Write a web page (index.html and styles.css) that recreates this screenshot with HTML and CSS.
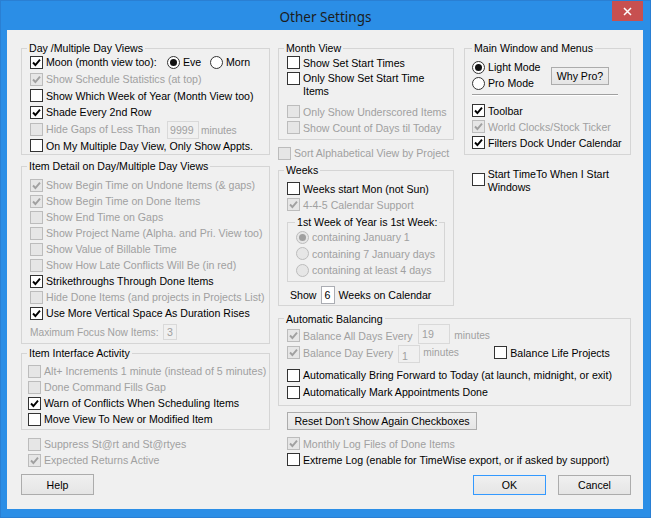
FILE: index.html
```html
<!DOCTYPE html>
<html>
<head>
<meta charset="utf-8">
<title>Other Settings</title>
<link rel="stylesheet" href="styles.css">
</head>
<body>
<div class="window">
  <div class="titlebar">
    <span></span>
    <div class="title">Other Settings</div>
    <div class="close"><svg viewBox="0 0 9 9" width="9" height="9"><path d="M1 1L8 8M8 1L1 8"/></svg></div>
  </div>
  <div class="client">
    <div class="col-left">
      <fieldset class="fs g-day">
        <legend>Day /Multiple Day Views</legend>
        <div class="ck tall"><span class="cb"><svg class="tick" viewBox="0 0 11 11"><path d="M2 5.5L4.4 8L9 2.6"/></svg></span><span class="w-moon">Moon (month view too):</span><span class="rb on"></span><span class="w-eve">Eve</span><span class="rb"></span><span>Morn</span></div>
        <div class="ck tall dis"><span class="cb"><svg class="tick" viewBox="0 0 11 11"><path d="M2 5.5L4.4 8L9 2.6"/></svg></span>Show Schedule Statistics (at top)</div>
        <div class="ck tall"><span class="cb"></span>Show Which Week of Year (Month View too)</div>
        <div class="ck tall"><span class="cb"><svg class="tick" viewBox="0 0 11 11"><path d="M2 5.5L4.4 8L9 2.6"/></svg></span>Shade Every 2nd Row</div>
        <div class="ck tall dis"><span class="cb"></span><span class="w-moon">Hide Gaps of Less Than</span><span class="inp i-gaps">9999</span><span class="small">minutes</span></div>
        <div class="ck tall"><span class="cb"></span>On My Multiple Day View, Only Show Appts.</div>
      </fieldset>

      <fieldset class="fs g-detail">
        <legend>Item Detail on Day/Multiple Day Views</legend>
        <div class="ck dis"><span class="cb"><svg class="tick" viewBox="0 0 11 11"><path d="M2 5.5L4.4 8L9 2.6"/></svg></span>Show Begin Time on Undone Items (&amp; gaps)</div>
        <div class="ck dis"><span class="cb"><svg class="tick" viewBox="0 0 11 11"><path d="M2 5.5L4.4 8L9 2.6"/></svg></span>Show Begin Time on Done Items</div>
        <div class="ck dis"><span class="cb"></span>Show End Time on Gaps</div>
        <div class="ck dis"><span class="cb"></span>Show Project Name (Alpha. and Pri. View too)</div>
        <div class="ck dis"><span class="cb"></span>Show Value of Billable Time</div>
        <div class="ck dis"><span class="cb"></span>Show How Late Conflicts Will Be (in red)</div>
        <div class="ck"><span class="cb"><svg class="tick" viewBox="0 0 11 11"><path d="M2 5.5L4.4 8L9 2.6"/></svg></span>Strikethroughs Through Done Items</div>
        <div class="ck dis"><span class="cb"></span>Hide Done Items (and projects in Projects List)</div>
        <div class="ck"><span class="cb"><svg class="tick" viewBox="0 0 11 11"><path d="M2 5.5L4.4 8L9 2.6"/></svg></span>Use More Vertical Space As Duration Rises</div>
        <div class="ck dis maxf"><span class="small w-maxf">Maximum Focus Now Items:</span><span class="inp i-max">3</span></div>
      </fieldset>

      <fieldset class="fs g-iface">
        <legend>Item Interface Activity</legend>
        <div class="ck dis"><span class="cb"></span>Alt+ Increments 1 minute (instead of 5 minutes)</div>
        <div class="ck dis"><span class="cb"></span>Done Command Fills Gap</div>
        <div class="ck"><span class="cb"><svg class="tick" viewBox="0 0 11 11"><path d="M2 5.5L4.4 8L9 2.6"/></svg></span>Warn of Conflicts When Scheduling Items</div>
        <div class="ck"><span class="cb"></span>Move View To New or Modified Item</div>
      </fieldset>

      <div class="loose">
        <div class="ck dis"><span class="cb"></span>Suppress St@rt and St@rtyes</div>
        <div class="ck dis"><span class="cb"><svg class="tick" viewBox="0 0 11 11"><path d="M2 5.5L4.4 8L9 2.6"/></svg></span>Expected Returns Active</div>
      </div>

      <div class="btn help">Help</div>
    </div>

    <div class="col-main">
      <div class="top-row">
        <div class="col-mid">
          <fieldset class="fs g-month">
            <legend>Month View</legend>
            <div class="ck"><span class="cb"></span>Show Set Start Times</div>
            <div class="ck two"><span class="cb"></span><span class="lines">Only Show Set Start Time<br>Items</span></div>
            <div class="ck dis gap4"><span class="cb"></span>Only Show Underscored Items</div>
            <div class="ck dis"><span class="cb"></span>Show Count of Days til Today</div>
          </fieldset>

          <div class="ck dis sort"><span class="cb"></span>Sort Alphabetical View by Project</div>

          <fieldset class="fs g-weeks">
            <legend>Weeks</legend>
            <div class="ck"><span class="cb"></span>Weeks start Mon (not Sun)</div>
            <div class="ck dis"><span class="cb"><svg class="tick" viewBox="0 0 11 11"><path d="M2 5.5L4.4 8L9 2.6"/></svg></span>4-4-5 Calendar Support</div>
            <fieldset class="fs g-first dis">
              <legend>1st Week of Year is 1st Week:</legend>
              <div class="ck r3"><span class="rb on"></span>containing January 1</div>
              <div class="ck r3"><span class="rb"></span>containing 7 January days</div>
              <div class="ck r3"><span class="rb"></span>containing at least 4 days</div>
            </fieldset>
            <div class="showrow"><span>Show</span><span class="inp en6">6</span><span>Weeks on Calendar</span></div>
          </fieldset>
        </div>

        <div class="col-right">
          <fieldset class="fs g-main">
            <legend>Main Window and Menus</legend>
            <div class="modes">
              <div class="modecol">
                <div class="ck"><span class="rb on"></span>Light Mode</div>
                <div class="ck"><span class="rb"></span>Pro Mode</div>
              </div>
              <div class="btn whypro">Why Pro?</div>
            </div>
            <div class="sep"></div>
            <div class="ck"><span class="cb"><svg class="tick" viewBox="0 0 11 11"><path d="M2 5.5L4.4 8L9 2.6"/></svg></span>Toolbar</div>
            <div class="ck dis"><span class="cb"><svg class="tick" viewBox="0 0 11 11"><path d="M2 5.5L4.4 8L9 2.6"/></svg></span>World Clocks/Stock Ticker</div>
            <div class="ck"><span class="cb"><svg class="tick" viewBox="0 0 11 11"><path d="M2 5.5L4.4 8L9 2.6"/></svg></span>Filters Dock Under Calendar</div>
          </fieldset>
          <div class="ck start"><span class="cb"></span><span class="lines">Start TimeTo When I Start<br>Windows</span></div>
        </div>
      </div>

      <fieldset class="fs g-auto">
        <legend>Automatic Balancing</legend>
        <div class="ck tall dis"><span class="cb"><svg class="tick" viewBox="0 0 11 11"><path d="M2 5.5L4.4 8L9 2.6"/></svg></span><span class="w-ball">Balance All Days Every</span><span class="inp i19">19</span><span class="small m-min1">minutes</span></div>
        <div class="ck tall dis"><span class="cb"><svg class="tick" viewBox="0 0 11 11"><path d="M2 5.5L4.4 8L9 2.6"/></svg></span><span class="w-bday">Balance Day Every</span><span class="inp i1">1</span><span class="small w-min2">minutes</span><span class="en"><span class="cb"></span>Balance Life Projects</span></div>
        <div class="ck h17 gap6"><span class="cb"></span>Automatically Bring Forward to Today (at launch, midnight, or exit)</div>
        <div class="ck h17"><span class="cb"></span>Automatically Mark Appointments Done</div>
      </fieldset>

      <div class="btn reset">Reset Don't Show Again Checkboxes</div>

      <div class="loose2">
        <div class="ck dis"><span class="cb"><svg class="tick" viewBox="0 0 11 11"><path d="M2 5.5L4.4 8L9 2.6"/></svg></span>Monthly Log Files of Done Items</div>
        <div class="ck"><span class="cb"></span>Extreme Log (enable for TimeWise export, or if asked by support)</div>
      </div>

      <div class="actions">
        <div class="btn def">OK</div>
        <div class="btn">Cancel</div>
      </div>
    </div>
  </div>
</div>
</body>
</html>
```

FILE: styles.css
```css
* { box-sizing: border-box; }
html, body { margin: 0; padding: 0; }
body {
  width: 651px; height: 518px; overflow: hidden;
  background: #2b8ee6;
  font-family: "Liberation Sans", Arial, sans-serif;
  font-size: 10.6px; color: #000;
}
.window {
  width: 651px; height: 518px;
  background: #2b8ee6;
  box-shadow: inset 0 0 0 1px #2a7fd3;
  display: flex; flex-direction: column;
}
.titlebar {
  height: 30px; flex: none;
  display: grid; grid-template-columns: 1fr auto 1fr;
}
.title {
  font-family: "Noto Sans", "Open Sans", sans-serif;
  font-size: 13.5px; color: #1c1c1c;
  line-height: 30px; padding-top: 2px;
}
.close {
  justify-self: end; align-self: start;
  margin: 1px 8px 0 0;
  width: 31px; height: 20px;
  background: #c75050;
  display: flex; align-items: center; justify-content: center;
}
.close svg path { stroke: #fff; stroke-width: 1.5; fill: none; }

.client {
  margin: 0 8px 0 7px;
  height: 479px;
  background: #f0f0f0;
  display: flex;
  padding: 0 12px 0 14px;
}
.col-left { width: 249px; flex: none; display: flex; flex-direction: column; }
.col-main { width: 353px; margin-left: 8px; flex: none; display: flex; flex-direction: column; }
.top-row { display: flex; align-items: flex-start; }
.col-mid { width: 176px; flex: none; display: flex; flex-direction: column; }
.col-right { width: 167px; margin-left: 10px; flex: none; display: flex; flex-direction: column; }

/* group boxes */
.fs {
  border: 1px solid #d5d5d5;
  margin: 0;
  padding: 0 8px;
  min-width: 0;
}
.fs > legend {
  padding: 0 2px;
  margin-left: -3px;
  line-height: 12px;
  height: 12px;
  color: #000;
  white-space: nowrap;
}

/* rows */
.ck {
  display: flex; align-items: center;
  height: 16px;
  white-space: nowrap;
}
.ck.tall { height: 16.7px; }
.ck.h17 { height: 17px; }
.ck.r3 { height: 16.33px; }
.dis { color: #a0a0a0; }
.small { font-size: 10.2px; }

.cb {
  width: 13px; height: 13px; flex: none;
  border: 1px solid #333;
  background: #fff;
  margin-right: 3px;
}
.dis .cb { border-color: #bcbcbc; background: #e6e6e6; }
.tick { width: 11px; height: 11px; display: block; }
.tick path { fill: none; stroke: #000; stroke-width: 1.9; }
.dis .tick path { stroke: #a0a0a0; }

.en { display: flex; align-items: center; color: #000; }
.dis .en .cb { border-color: #333; background: #fff; }

.rb {
  width: 13px; height: 13px; flex: none;
  border: 1px solid #333; border-radius: 50%;
  background: #fff;
  margin-right: 3px;
  display: flex; align-items: center; justify-content: center;
}
.rb.on::after {
  content: ""; width: 7px; height: 7px; border-radius: 50%; background: #111;
}
.dis .rb { border-color: #bcbcbc; background: #e6e6e6; }
.dis .rb.on::after { background: #a0a0a0; }

.inp {
  display: flex; align-items: center; flex: none;
  height: 18px;
  border: 1px solid #d9d9d9;
  background: #f0f0f0;
  color: #a0a0a0;
  padding: 0 2px;
}

.btn {
  display: flex; align-items: center; justify-content: center; flex: none;
  border: 1px solid #acacac;
  background: linear-gradient(#f0f0f0, #e5e5e5);
  color: #000;
}
.btn.def { border-color: #3399ff; }

/* left column */
.g-day { margin-top: 12px; }
.w-moon { width: 121px; }
.w-eve { width: 27px; }
.i-gaps { width: 32px; margin-top: 2px; }
.i-gaps + .small { margin-left: 2px; margin-top: 3px; }

.g-detail { margin-top: 5px; padding-top: 5px; }
.maxf { height: 22px; }
.w-maxf { width: 133px; }
.i-max { width: 14px; height: 16px; justify-content: center; padding: 0; }

.g-iface { margin-top: 3px; padding: 4px 8px 2px 6px; }
.g-iface > legend { margin-left: -1px; }

.loose { margin-top: 6px; padding-left: 7px; }
.help { margin-top: 6px; width: 73px; height: 21px; }

/* middle column */
.g-month { margin-top: 12px; padding: 0.7px 8px 3px; }
.ck.two { height: 29px; align-items: flex-start; }
.two .cb { margin-top: 1.8px; }
.lines { line-height: 13px; padding-top: 1.5px; }
.gap4 { margin-top: 4px; }
.sort { margin-top: 5.6px; }

.g-weeks { margin-top: 3px; padding: 4.5px 8px 1px; }
.g-first { margin-top: 3.5px; padding: 1px 2px 2.4px 8px; }
.g-first > legend { margin-left: -1px; }
.showrow {
  margin-top: 4.3px; height: 18px;
  display: flex; align-items: center;
  padding-left: 3px;
}
.inp.en6 {
  width: 14px; margin: 0 4px;
  background: #fff; border-color: #abadb3; color: #000;
  justify-content: center; padding: 0;
}

/* right column */
.g-main { margin-top: 12px; padding: 5.3px 7px 3.5px; }
.g-main > legend { margin-left: 0; }
.modes { display: flex; align-items: flex-start; }
.modecol { width: 79px; }
.whypro { margin-top: 7.4px; width: 58px; height: 18.5px; }
.sep {
  margin: 3px 5px 0 0; height: 2px;
  border-top: 1px solid #a0a0a0; border-bottom: 1px solid #fff;
}
.sep + .ck { margin-top: 6.7px; }
.ck.start { margin-top: 11.5px; height: 26px; padding-left: 7.7px; }

/* automatic balancing */
.g-auto { margin-top: 7px; padding: 2.7px 8px 4px; }
.w-ball { width: 115px; }
.i19 { width: 32px; height: 20px; margin-top: -3px; padding-left: 3px; }
.m-min1 { margin-left: 4.3px; }
.w-bday { width: 95px; }
.i1 { width: 22px; height: 18px; margin-top: 3px; padding-left: 3px; padding-top: 3px; }
.w-min2 { width: 74.3px; padding-left: 3.3px; }
.gap6 { margin-top: 5.8px; }

.reset { margin: 6px 0 0 9px; width: 190px; height: 18px; }
.loose2 { margin-top: 5.8px; padding-left: 9px; }
.actions {
  margin-top: 7px;
  display: flex; justify-content: flex-end; gap: 12px;
}
.actions .btn { width: 73px; height: 20px; }
```
